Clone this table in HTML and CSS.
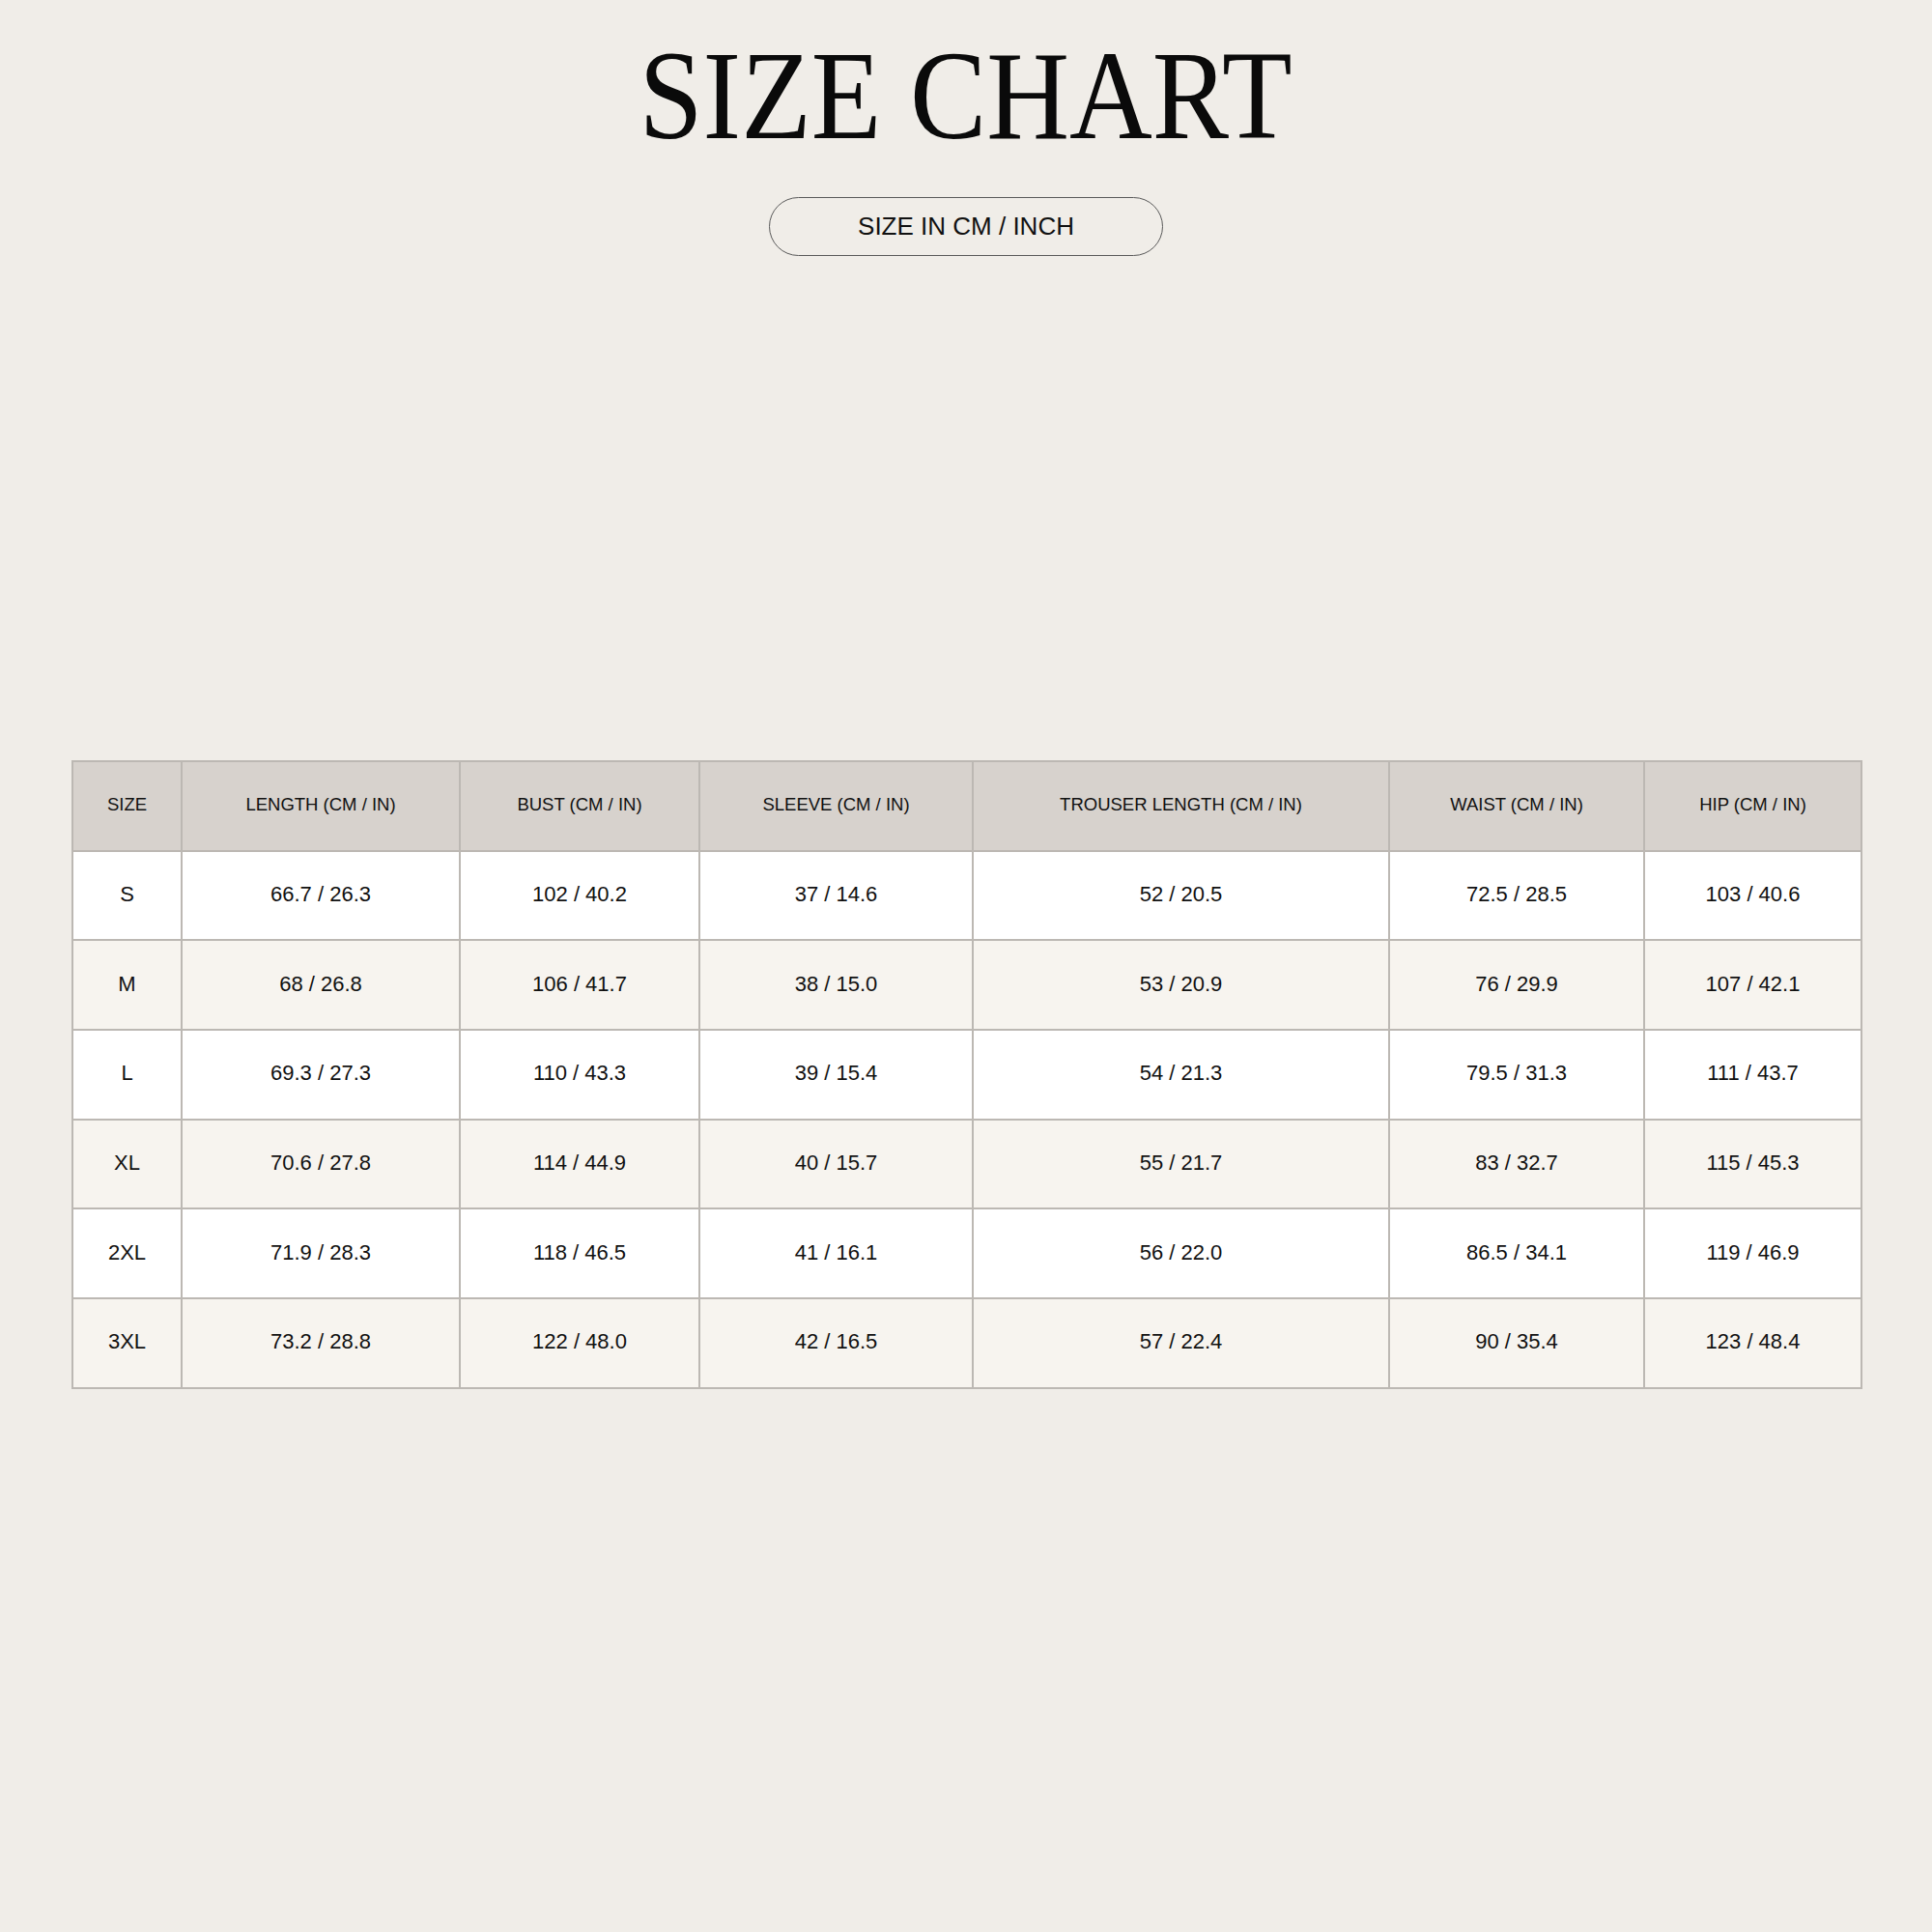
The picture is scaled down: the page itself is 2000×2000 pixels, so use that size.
FILE: index.html
```html
<!DOCTYPE html>
<html lang="en">
<head>
<meta charset="utf-8">
<title>Size Chart</title>
<link rel="stylesheet" href="styles.css">
</head>
<body>
<div class="page">
  <header class="head">
    <h1 class="title"><span class="title-text">SIZE CHART</span></h1>
    <div class="pill">SIZE IN CM / INCH</div>
  </header>
  <table class="chart">
    <colgroup>
      <col class="c1"><col class="c2"><col class="c3"><col class="c4"><col class="c5"><col class="c6"><col class="c7">
    </colgroup>
    <thead>
      <tr>
        <th>SIZE</th><th>LENGTH (CM / IN)</th><th>BUST (CM / IN)</th><th>SLEEVE (CM / IN)</th><th>TROUSER LENGTH (CM / IN)</th><th>WAIST (CM / IN)</th><th>HIP (CM / IN)</th>
      </tr>
    </thead>
    <tbody>
      <tr><td>S</td><td>66.7 / 26.3</td><td>102 / 40.2</td><td>37 / 14.6</td><td>52 / 20.5</td><td>72.5 / 28.5</td><td>103 / 40.6</td></tr>
      <tr class="alt"><td>M</td><td>68 / 26.8</td><td>106 / 41.7</td><td>38 / 15.0</td><td>53 / 20.9</td><td>76 / 29.9</td><td>107 / 42.1</td></tr>
      <tr><td>L</td><td>69.3 / 27.3</td><td>110 / 43.3</td><td>39 / 15.4</td><td>54 / 21.3</td><td>79.5 / 31.3</td><td>111 / 43.7</td></tr>
      <tr class="alt"><td>XL</td><td>70.6 / 27.8</td><td>114 / 44.9</td><td>40 / 15.7</td><td>55 / 21.7</td><td>83 / 32.7</td><td>115 / 45.3</td></tr>
      <tr><td>2XL</td><td>71.9 / 28.3</td><td>118 / 46.5</td><td>41 / 16.1</td><td>56 / 22.0</td><td>86.5 / 34.1</td><td>119 / 46.9</td></tr>
      <tr class="alt"><td>3XL</td><td>73.2 / 28.8</td><td>122 / 48.0</td><td>42 / 16.5</td><td>57 / 22.4</td><td>90 / 35.4</td><td>123 / 48.4</td></tr>
    </tbody>
  </table>
</div>
</body>
</html>
```
FILE: styles.css
```css
html, body {
  margin: 0;
  padding: 0;
  background: #f0ede8;
}
body {
  font-family: "Liberation Sans", Arial, sans-serif;
  color: #111;
}
.page {
  width: 2000px;
  min-height: 2000px;
  box-sizing: border-box;
  padding-top: 33px;
}
.head {
  display: flex;
  flex-direction: column;
  align-items: center;
}
.title {
  margin: 0;
  font-family: "Liberation Serif", "Times New Roman", serif;
  font-weight: 400;
  font-size: 132px;
  line-height: 131px;
  color: #0a0a0a;
  text-align: center;
}
.title-text {
  display: inline-block;
  transform: scaleX(0.9);
}
.pill {
  margin-top: 40px;
  width: 408px;
  height: 61px;
  box-sizing: border-box;
  border: 1.5px solid #5a5a5a;
  border-radius: 31px;
  display: flex;
  align-items: center;
  justify-content: center;
  font-size: 26px;
  color: #111;
}
.chart {
  margin: 522px 0 0 74px;
  width: 1852px;
  table-layout: fixed;
  border-collapse: collapse;
  border: 2px solid #bcb8b3;
}
.c1 { width: 113px; }
.c2 { width: 288px; }
.c3 { width: 248px; }
.c4 { width: 283px; }
.c5 { width: 431px; }
.c6 { width: 264px; }
.c7 { width: 225px; }
.chart th, .chart td {
  border: 2px solid #bcb8b3;
  height: 88.7px;
  padding: 0 0 2px;
  box-sizing: content-box;
  text-align: center;
  vertical-align: middle;
}
.chart th {
  background: #d7d2cd;
  font-weight: 400;
  font-size: 18.5px;
  color: #111;
}
.chart td {
  background: #ffffff;
  font-size: 22px;
}
.chart tr.alt td {
  background: #f7f4ef;
}
```
